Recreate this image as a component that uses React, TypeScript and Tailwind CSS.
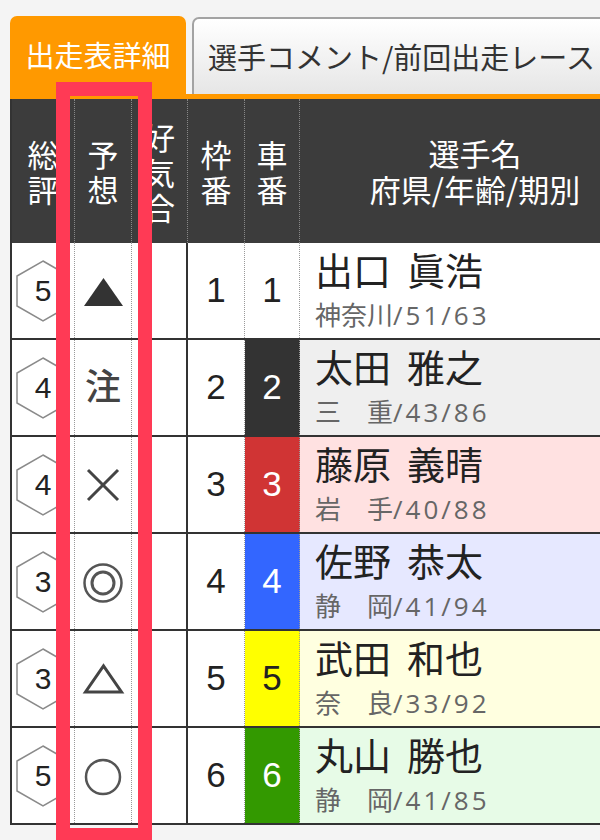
import React from 'react'

type Row = {
  hex: number
  mark: 'tri' | 'chu' | 'x' | 'dbl' | 'tri-o' | 'circle'
  waku: number
  sha: number
  shaCls: string
  nameBg: string
  name: string
  pref: string
  info: string
}

const rows: Row[] = [
  { hex: 5, mark: 'tri', waku: 1, sha: 1, shaCls: 'bg-white text-[#222]', nameBg: 'bg-white', name: '出口 眞浩', pref: '神奈川', info: '/51/63' },
  { hex: 4, mark: 'chu', waku: 2, sha: 2, shaCls: 'bg-[#333333] text-white', nameBg: 'bg-[#efefef]', name: '太田 雅之', pref: '三　重', info: '/43/86' },
  { hex: 4, mark: 'x', waku: 3, sha: 3, shaCls: 'bg-[#d03434] text-white', nameBg: 'bg-[#ffe1e1]', name: '藤原 義晴', pref: '岩　手', info: '/40/88' },
  { hex: 3, mark: 'dbl', waku: 4, sha: 4, shaCls: 'bg-[#3366ff] text-white', nameBg: 'bg-[#e6e8ff]', name: '佐野 恭太', pref: '静　岡', info: '/41/94' },
  { hex: 3, mark: 'tri-o', waku: 5, sha: 5, shaCls: 'bg-[#ffff00] text-[#222]', nameBg: 'bg-[#ffffe0]', name: '武田 和也', pref: '奈　良', info: '/33/92' },
  { hex: 5, mark: 'circle', waku: 6, sha: 6, shaCls: 'bg-[#339900] text-white', nameBg: 'bg-[#e7fbe7]', name: '丸山 勝也', pref: '静　岡', info: '/41/85' },
]

function Hex({ n }: { n: number }) {
  return (
    <div className="relative w-[54px] h-[62px] flex items-center justify-center">
      <svg width="54" height="62" viewBox="0 0 54 62" className="absolute inset-0">
        <polygon points="27,1 53,16 53,46 27,61 1,46 1,16" fill="none" stroke="#8a8a8a" strokeWidth="1.5" />
      </svg>
      <span className="relative text-[30px] leading-none text-[#222]">{n}</span>
    </div>
  )
}

function Mark({ kind }: { kind: Row['mark'] }) {
  if (kind === 'chu') {
    return <span className="text-[36px] leading-none font-medium text-[#444]">注</span>
  }
  return (
    <svg width="44" height="44" viewBox="0 0 44 44">
      {kind === 'tri' && <polygon points="3,37 42,37 22.5,9" fill="#333" />}
      {kind === 'x' && (
        <g stroke="#444" strokeWidth="3">
          <line x1="7" y1="7" x2="37" y2="37" />
          <line x1="37" y1="7" x2="7" y2="37" />
        </g>
      )}
      {kind === 'dbl' && (
        <g fill="none" stroke="#555">
          <circle cx="22" cy="23" r="18.5" strokeWidth="2.5" />
          <circle cx="22" cy="23" r="11" strokeWidth="3" />
        </g>
      )}
      {kind === 'tri-o' && <polygon points="4.5,35 40.5,35 22.5,9" fill="none" stroke="#444" strokeWidth="3" />}
      {kind === 'circle' && <circle cx="22" cy="23" r="17" fill="none" stroke="#555" strokeWidth="2.5" />}
    </svg>
  )
}

// stacked header label, one character per line
function Stack({ chars }: { chars: string }) {
  return (
    <div className="flex flex-col items-center">
      {chars.split('').map((c, i) => (
        <span key={i} className="block h-[35px] leading-[35px]">{c}</span>
      ))}
    </div>
  )
}

export default function App() {
  return (
    <div className="relative w-[600px] h-[840px] overflow-hidden bg-[#f4f4f4] pl-[10px] pt-[16px] font-['Liberation_Sans','Noto_Sans_CJK_JP',sans-serif]">
      {/* tabs */}
      <div className="flex items-end gap-[6px] h-[78px] font-['Noto_Sans_CJK_JP',sans-serif]">
        <div className="w-[176px] h-[78px] shrink-0 rounded-t-[7px] bg-[#ff9900] flex items-center justify-center text-white text-[29px]">
          出走表詳細
        </div>
        <div className="h-[77px] shrink-0 rounded-t-[7px] border-2 border-b-0 border-[#a3a3a3] bg-gradient-to-b from-white to-[#e6e6e6] flex items-center px-[14px] text-[#333] text-[29px] whitespace-nowrap">
          選手コメント/前回出走レース
        </div>
      </div>
      <div className="h-[5px] w-[640px] bg-[#ff9900]" />

      {/* table */}
      <div className="w-[640px] border-l-2 border-[#333]">
        <div className="grid grid-cols-[63px_57px_56px_57px_55px_350px] h-[144px] bg-[#3c3c3c] text-white text-[31px] leading-[35px] text-center font-['Noto_Sans_CJK_JP',sans-serif]">
          <div className="flex items-center justify-center border-r border-dotted border-[#888]"><Stack chars="総評" /></div>
          <div className="flex items-center justify-center border-r border-dotted border-[#888]"><Stack chars="予想" /></div>
          <div className="flex items-center justify-center border-r border-dotted border-[#888]"><Stack chars="好気合" /></div>
          <div className="flex items-center justify-center border-r border-dotted border-[#888]"><Stack chars="枠番" /></div>
          <div className="flex items-center justify-center border-r border-dotted border-[#888]"><Stack chars="車番" /></div>
          <div className="flex flex-col items-center justify-center">
            <span className="block h-[36px] leading-[36px]">選手名</span>
            <span className="block h-[36px] leading-[36px]">府県/年齢/期別</span>
          </div>
        </div>

        {rows.map((r) => {
          const [last, first] = r.name.split(' ')
          return (
            <div key={r.sha} className="grid grid-cols-[63px_57px_56px_57px_55px_350px] h-[97px] border-b-2 border-[#333] bg-white">
              <div className="flex items-center justify-center border-r border-dotted border-[#999]">
                <Hex n={r.hex} />
              </div>
              <div className="flex items-center justify-center border-r border-dotted border-[#999]">
                <Mark kind={r.mark} />
              </div>
              <div className="border-r-2 border-[#333]" />
              <div className="flex items-center justify-center border-r border-dotted border-[#999] text-[35px] text-[#222]">
                {r.waku}
              </div>
              <div className={`flex items-center justify-center border-r border-dotted border-[#999] text-[35px] ${r.shaCls}`}>
                {r.sha}
              </div>
              <div className={`flex flex-col justify-center pl-[15px] ${r.nameBg}`}>
                <div className="flex gap-[16px] text-[38px] leading-[44px] text-[#222]">
                  <span>{last}</span>
                  <span>{first}</span>
                </div>
                <div className="mt-[6px] text-[26px] leading-[30px] text-[#666]">
                  {r.pref}
                  <span className="font-['Open_Sans',sans-serif] tracking-[3px]">{r.info}</span>
                </div>
              </div>
            </div>
          )
        })}
      </div>

      {/* highlight annotation */}
      <div className="absolute left-[56px] top-[82px] w-[96px] h-[760px] border-[14px] border-[#ff3a55]" />
    </div>
  )
}
